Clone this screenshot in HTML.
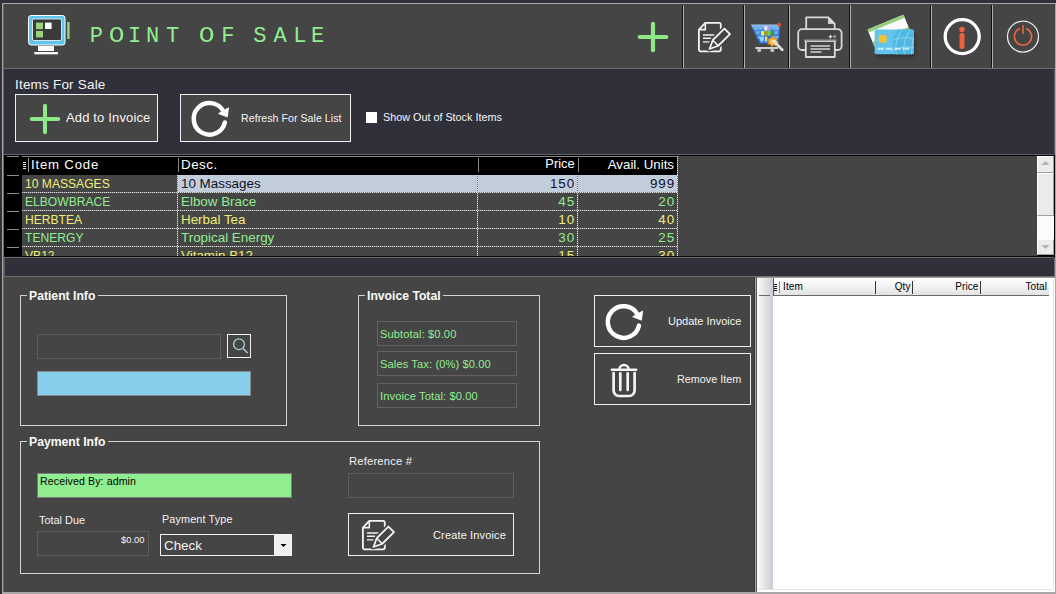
<!DOCTYPE html><html><head><meta charset="utf-8"><style>html,body{margin:0;padding:0;width:1056px;height:594px;overflow:hidden;background:#30303a;position:relative}</style></head><body>
<div style="position:absolute;left:4px;top:4px;width:1051px;height:64px;background:#454545"></div>
<div style="position:absolute;left:2px;top:3px;width:1054px;height:1px;background:#a8a8a8"></div>
<div style="position:absolute;left:2px;top:3px;width:1px;height:591px;background:#a4a4a4"></div>
<div style="position:absolute;left:3px;top:4px;width:1px;height:590px;background:#686868"></div>
<div style="position:absolute;left:1055px;top:3px;width:1px;height:591px;background:#a8a8a8"></div>
<div style="position:absolute;left:4px;top:68px;width:1051px;height:1px;background:#6c6c6c"></div>
<div style="position:absolute;left:1054px;top:69px;width:1px;height:85px;background:#5c5c5c"></div>
<div style="position:absolute;left:682px;top:5px;width:1px;height:63px;background:#111"></div>
<div style="position:absolute;left:683px;top:5px;width:1px;height:63px;background:#b0b0b0"></div>
<div style="position:absolute;left:743px;top:5px;width:1px;height:63px;background:#111"></div>
<div style="position:absolute;left:744px;top:5px;width:1px;height:63px;background:#b0b0b0"></div>
<div style="position:absolute;left:788px;top:5px;width:1px;height:63px;background:#111"></div>
<div style="position:absolute;left:789px;top:5px;width:1px;height:63px;background:#b0b0b0"></div>
<div style="position:absolute;left:849px;top:5px;width:1px;height:63px;background:#111"></div>
<div style="position:absolute;left:850px;top:5px;width:1px;height:63px;background:#b0b0b0"></div>
<div style="position:absolute;left:930px;top:5px;width:1px;height:63px;background:#111"></div>
<div style="position:absolute;left:931px;top:5px;width:1px;height:63px;background:#b0b0b0"></div>
<div style="position:absolute;left:991px;top:5px;width:1px;height:63px;background:#111"></div>
<div style="position:absolute;left:992px;top:5px;width:1px;height:63px;background:#b0b0b0"></div>
<svg style="position:absolute;left:0;top:0" width="100" height="68" viewBox="0 0 100 68">
<rect x="28.5" y="15.5" width="36.5" height="29.5" rx="2.5" fill="#5ec6ec" stroke="#fff" stroke-width="1"/>
<rect x="32.5" y="19" width="29" height="21.5" rx="1.5" fill="#3a3a3a" stroke="#fff" stroke-width="0.8"/>
<rect x="36" y="22.6" width="7" height="6.6" fill="#9bd27c"/>
<rect x="36" y="31" width="7" height="6.4" fill="#9bd27c"/>
<rect x="45" y="22.6" width="6.6" height="6.4" fill="#fff"/>
<rect x="67.2" y="22" width="2.4" height="17" fill="#9bd27c"/>
<rect x="38" y="46" width="16" height="5" fill="#fafafa"/>
<rect x="34.3" y="52" width="23.6" height="2.3" fill="#fafafa"/>
</svg>
<div style="position:absolute;left:89.8px;top:26px;font-family:'Liberation Mono',sans-serif;font-size:22px;line-height:1;font-weight:400;color:#90ee90;white-space:pre;letter-spacing:0px;">P</div>
<div style="position:absolute;left:109.5px;top:26px;font-family:'Liberation Mono',sans-serif;font-size:22px;line-height:1;font-weight:400;color:#90ee90;white-space:pre;letter-spacing:0px;transform:scaleX(1.2);">O</div>
<div style="position:absolute;left:128.0px;top:26px;font-family:'Liberation Mono',sans-serif;font-size:22px;line-height:1;font-weight:400;color:#90ee90;white-space:pre;letter-spacing:0px;">I</div>
<div style="position:absolute;left:145.9px;top:26px;font-family:'Liberation Mono',sans-serif;font-size:22px;line-height:1;font-weight:400;color:#90ee90;white-space:pre;letter-spacing:0px;">N</div>
<div style="position:absolute;left:166.0px;top:26px;font-family:'Liberation Mono',sans-serif;font-size:22px;line-height:1;font-weight:400;color:#90ee90;white-space:pre;letter-spacing:0px;">T</div>
<div style="position:absolute;left:199.9px;top:26px;font-family:'Liberation Mono',sans-serif;font-size:22px;line-height:1;font-weight:400;color:#90ee90;white-space:pre;letter-spacing:0px;transform:scaleX(1.2);">O</div>
<div style="position:absolute;left:221.2px;top:26px;font-family:'Liberation Mono',sans-serif;font-size:22px;line-height:1;font-weight:400;color:#90ee90;white-space:pre;letter-spacing:0px;">F</div>
<div style="position:absolute;left:253.2px;top:26px;font-family:'Liberation Mono',sans-serif;font-size:22px;line-height:1;font-weight:400;color:#90ee90;white-space:pre;letter-spacing:0px;">S</div>
<div style="position:absolute;left:273.5px;top:26px;font-family:'Liberation Mono',sans-serif;font-size:22px;line-height:1;font-weight:400;color:#90ee90;white-space:pre;letter-spacing:0px;">A</div>
<div style="position:absolute;left:293.2px;top:26px;font-family:'Liberation Mono',sans-serif;font-size:22px;line-height:1;font-weight:400;color:#90ee90;white-space:pre;letter-spacing:0px;">L</div>
<div style="position:absolute;left:311.1px;top:26px;font-family:'Liberation Mono',sans-serif;font-size:22px;line-height:1;font-weight:400;color:#90ee90;white-space:pre;letter-spacing:0px;">E</div>
<svg style="position:absolute;left:0;top:0;overflow:visible" width="1" height="1"><path d="M639.75 37H666.25M653 23.75V50.25" stroke="#8ee88a" stroke-width="4.2" stroke-linecap="round" fill="none"/></svg>
<svg style="position:absolute;left:698px;top:21.6px;overflow:visible" width="34" height="32" viewBox="0 0 34 32"><path d="M0.9 7.6L7.3 0.9H21a1.8 1.8 0 0 1 1.8 1.8V27.6a1.8 1.8 0 0 1 -1.8 1.8H2.7a1.8 1.8 0 0 1 -1.8 -1.8Z" fill="none" stroke="#f4f4f4" stroke-width="1.8" stroke-linejoin="round"/><path d="M7.3 0.9V7.6H0.9" fill="none" stroke="#f4f4f4" stroke-width="1.6"/><path d="M5 13H16.5M5 16.3H13M5 19.9H11.8" stroke="#f4f4f4" stroke-width="1.4"/><path d="M11.50 27.00L20.27 23.75L31.94 12.08L26.42 6.56L14.75 18.23Z" fill="#454545" stroke="#454545" stroke-width="5" stroke-linejoin="round"/><path d="M11.50 27.00L20.27 23.75L31.94 12.08L26.42 6.56L14.75 18.23Z" fill="#454545" stroke="#f4f4f4" stroke-width="1.8" stroke-linejoin="round"/><path d="M20.27 23.75L14.75 18.23" stroke="#f4f4f4" stroke-width="1.6"/></svg>
<svg style="position:absolute;left:745px;top:15px" width="45" height="45" viewBox="745 15 45 45">
<defs><linearGradient id="cg" x1="0" y1="0" x2="0" y2="1"><stop offset="0" stop-color="#9cc4f4"/><stop offset="0.25" stop-color="#4f8ee6"/><stop offset="1" stop-color="#2456cc"/></linearGradient>
<radialGradient id="sg"><stop offset="0" stop-color="#fce070"/><stop offset="0.6" stop-color="#f6a424"/><stop offset="1" stop-color="#e0601a"/></radialGradient></defs>
<path d="M750.9 24.6H779.6L778.9 43.8H759.4Z" fill="url(#cg)"/>
<g fill="#6fc0f2" opacity="0.9">
<rect x="754.5" y="27" width="3.2" height="2.6"/><rect x="758.8" y="27" width="3.2" height="2.6"/><rect x="772.5" y="27" width="3.2" height="2.6"/><rect x="776" y="27" width="2.6" height="2.6"/>
<rect x="756.2" y="31.2" width="3.2" height="2.8"/><rect x="774.5" y="31.2" width="3.2" height="2.8"/>
<rect x="757.8" y="35.8" width="2.6" height="3"/><rect x="772.5" y="35.8" width="3.2" height="3"/><rect x="776" y="35.8" width="2.5" height="3"/>
<rect x="760.2" y="40" width="3" height="2.5"/><rect x="764.5" y="40" width="3" height="2.5"/>
</g>
<rect x="764.3" y="26.3" width="3.2" height="4.2" fill="#ecebfa"/><rect x="767.5" y="26.3" width="3.2" height="4.2" fill="#a9a4d8"/>
<rect x="761" y="31.1" width="3.2" height="4.5" fill="#f0ec5a"/><rect x="764.2" y="31.1" width="3" height="4.5" fill="#9aa030"/>
<rect x="767.5" y="31.1" width="3.2" height="4.5" fill="#78d050"/><rect x="770.7" y="31.1" width="3" height="4.5" fill="#3c9a30"/>
<rect x="759.8" y="36.6" width="4.2" height="4.1" fill="#8fd4f6"/><rect x="765" y="36.6" width="2.2" height="4.1" fill="#f0ec5a"/>
<circle cx="779.2" cy="24.7" r="1.9" fill="#e84a30"/>
<path d="M773 35.6L774.4 38.6L777.8 37.4L776.6 40.6L779.4 42.5L776.2 43.5L776.6 46.8L773.5 45.2L771.2 47.6L770.4 44.4L767 44.6L768.8 41.8L766.4 39.4L769.8 38.4Z" fill="url(#sg)"/>
<path d="M773.8 41.2L782.3 49.8" stroke="#f0f0f0" stroke-width="2.6" stroke-linecap="round"/>
<path d="M775 42.4L782 49.4" stroke="#8a8a8a" stroke-width="0.9" stroke-dasharray="1 1.2"/>
<path d="M755.4 48H778" stroke="#d0d0d0" stroke-width="2"/>
<circle cx="759.2" cy="50.2" r="1.9" fill="#c4c4c4"/><circle cx="772.3" cy="50.2" r="1.9" fill="#c4c4c4"/>
</svg>
<svg style="position:absolute;left:790px;top:10px" width="60" height="55" viewBox="790 10 60 55">
<g fill="none" stroke="#dadada" stroke-width="1.8" stroke-linejoin="round">
<path d="M806.2 29.4V17.4H828.4L834.6 23.6V29.4"/>
<path d="M805 50H802a3.8 3.8 0 0 1 -3.8 -3.8V33a3.8 3.8 0 0 1 3.8 -3.8H837.8a3.8 3.8 0 0 1 3.8 3.8V46.2a3.8 3.8 0 0 1 -3.8 3.8H835"/>
<rect x="805.8" y="41.2" width="29" height="15.8"/>
</g>
<path d="M828.4 17.4V23.6H834.6Z" fill="#dadada" stroke="#dadada" stroke-width="0.8"/>
<path d="M804 40.3H836.5" stroke="#9a9a9a" stroke-width="1.8"/>
<path d="M810.5 45.9H830M810.5 48.9H830M810.5 51.9H821.5" stroke="#d4d4d4" stroke-width="1.5"/>
<path d="M828.7 36.6H832.3M830.5 34.8V38.4" stroke="#e0e0e0" stroke-width="1.1"/><path d="M833 36.6H836.4M834.7 34.9V38.3" stroke="#a8a8a8" stroke-width="1"/>
</svg>
<svg style="position:absolute;left:851px;top:5px" width="79" height="62" viewBox="851 5 79 62">
<defs><filter id="sh" x="-20%" y="-20%" width="140%" height="160%"><feGaussianBlur stdDeviation="1.6"/></filter>
<clipPath id="fc"><rect x="874.6" y="29.6" width="39.4" height="24.6" rx="2"/></clipPath></defs>
<rect x="876" y="33" width="39.4" height="24.6" rx="2" fill="#202020" opacity="0.55" filter="url(#sh)"/>
<g transform="translate(867.4 29.6) rotate(-22.5)">
<rect x="0" y="0" width="39" height="19" rx="1.5" fill="#fbfbfb"/>
<rect x="0" y="0" width="39" height="3.2" fill="#94d07a"/>
<rect x="0" y="13.4" width="39" height="5.6" fill="#94d07a"/>
</g>
<rect x="874.6" y="29.6" width="39.4" height="24.6" rx="2" fill="#63c5ec"/>
<g clip-path="url(#fc)">
<circle cx="918" cy="44" r="25" fill="#4eb8e4"/>
<g stroke="#92d8f2" stroke-width="0.9" fill="none">
<path d="M897 56C894 46 897 36 903 28"/><path d="M905 56C902 46 905 36 912 28"/>
<path d="M891 51C899 47 908 46 916 48"/><path d="M894 40C901 37 908 37 916 39"/>
<path d="M912 56C911 47 913 38 916 32"/>
</g></g>
<rect x="878.7" y="35" width="7.9" height="7.7" rx="1.6" fill="#f2c232"/>
<path d="M877.5 48.8H884M886 48.8H892.5M894.5 48.8H901M903 48.8H909.5" stroke="#f4fbff" stroke-width="2" stroke-dasharray="1.1 0.5"/>
</svg>
<svg style="position:absolute;left:931px;top:5px" width="60" height="63" viewBox="931 5 60 63">
<circle cx="962.2" cy="36.6" r="17" fill="none" stroke="#fff" stroke-width="3.3"/>
<circle cx="962" cy="29.4" r="2.7" fill="#ea6240"/>
<path d="M962 35.3V46.5" stroke="#ea6240" stroke-width="5" stroke-linecap="round"/>
</svg>
<svg style="position:absolute;left:993px;top:5px" width="61" height="63" viewBox="993 5 61 63">
<circle cx="1023" cy="36.6" r="15.5" fill="none" stroke="#e8e8e8" stroke-width="1.3"/>
<path d="M1019.8 28.5A8.6 8.6 0 1 0 1026.2 28.5" fill="none" stroke="#ee6a40" stroke-width="1.5"/>
<path d="M1023 25.3V34" stroke="#c8623e" stroke-width="2"/>
</svg>
<div style="position:absolute;left:15px;top:78px;font-family:'Liberation Sans',sans-serif;font-size:13.5px;line-height:1;font-weight:400;color:#f4f4f4;white-space:pre;letter-spacing:0.2px;">Items For Sale</div>
<div style="position:absolute;left:15px;top:94px;width:143px;height:48px;box-sizing:border-box;border:1px solid #f0f0f0;background:#454545;"></div>
<svg style="position:absolute;left:0;top:0;overflow:visible" width="1" height="1"><path d="M31.75 119H58.25M45 105.75V132.25" stroke="#8ee88a" stroke-width="4" stroke-linecap="round" fill="none"/></svg>
<div style="position:absolute;left:66px;top:111px;font-family:'Liberation Sans',sans-serif;font-size:13px;line-height:1;font-weight:400;color:#f4f4f4;white-space:pre;letter-spacing:0.15px;">Add to Invoice</div>
<div style="position:absolute;left:180px;top:94px;width:171px;height:48px;box-sizing:border-box;border:1px solid #f0f0f0;background:#454545;"></div>
<svg style="position:absolute;left:0;top:0;overflow:visible" width="1" height="1"><path d="M224.87 122.46A15.8 15.8 0 1 1 223.18 110.90" stroke="#fff" stroke-width="4.5" stroke-linecap="round" fill="none"/><path d="M228.55 107.80L218.51 113.60L227.40 117.01Z" fill="#fff" stroke="#fff" stroke-width="0.8" stroke-linejoin="round"/></svg>
<div style="position:absolute;left:241px;top:113px;font-family:'Liberation Sans',sans-serif;font-size:10.6px;line-height:1;font-weight:400;color:#f4f4f4;white-space:pre;letter-spacing:0.05px;">Refresh For Sale List</div>
<div style="position:absolute;left:366px;top:112px;width:11px;height:11px;background:#fff"></div>
<div style="position:absolute;left:383px;top:112px;font-family:'Liberation Sans',sans-serif;font-size:10.8px;line-height:1;font-weight:400;color:#f4f4f4;white-space:pre;letter-spacing:0px;">Show Out of Stock Items</div>
<div style="position:absolute;left:4px;top:154px;width:1050px;height:1px;background:#626262"></div>
<div style="position:absolute;left:4px;top:155px;width:1051px;height:101px;background:#000"></div>
<div style="position:absolute;left:4px;top:256px;width:1050px;height:1px;background:#0a0a0a"></div>
<div style="position:absolute;left:4px;top:257px;width:1050px;height:1px;background:#6a6a6a"></div>
<div style="position:absolute;left:4px;top:258px;width:1px;height:18px;background:#5a5a5a"></div>
<div style="position:absolute;left:1054px;top:258px;width:1px;height:18px;background:#6a6a6a"></div>
<div style="position:absolute;left:4px;top:276px;width:1051px;height:1px;background:#6e6e6e"></div>
<div style="position:absolute;left:4px;top:277px;width:1051px;height:315px;background:#454545"></div>
<div style="position:absolute;left:678px;top:156px;width:359px;height:100px;background:#454545"></div>
<div style="position:absolute;left:22px;top:156px;width:656px;height:1px;background:#888888"></div>
<div style="position:absolute;left:7px;top:156px;width:12px;height:1px;background:#8c8c8c"></div>
<div style="position:absolute;left:7px;top:175px;width:12px;height:1px;background:#8c8c8c"></div>
<div style="position:absolute;left:7px;top:193px;width:12px;height:1px;background:#8c8c8c"></div>
<div style="position:absolute;left:7px;top:211px;width:12px;height:1px;background:#8c8c8c"></div>
<div style="position:absolute;left:7px;top:229px;width:12px;height:1px;background:#8c8c8c"></div>
<div style="position:absolute;left:7px;top:247px;width:12px;height:1px;background:#8c8c8c"></div>
<div style="position:absolute;left:23px;top:162px;width:3px;height:1px;background:#e8e8e8"></div>
<div style="position:absolute;left:23px;top:164px;width:3px;height:1px;background:#e8e8e8"></div>
<div style="position:absolute;left:23px;top:166px;width:3px;height:1px;background:#e8e8e8"></div>
<div style="position:absolute;left:23px;top:168px;width:3px;height:1px;background:#e8e8e8"></div>
<div style="position:absolute;left:28px;top:158px;width:1px;height:14px;background:#9a9a9a"></div>
<div style="position:absolute;left:178px;top:158px;width:1px;height:14px;background:#8a8a8a"></div>
<div style="position:absolute;left:478px;top:158px;width:1px;height:14px;background:#8a8a8a"></div>
<div style="position:absolute;left:578px;top:158px;width:1px;height:14px;background:#8a8a8a"></div>
<div style="position:absolute;left:31px;top:158px;font-family:'Liberation Sans',sans-serif;font-size:13.2px;line-height:1;font-weight:400;color:#fff;white-space:pre;letter-spacing:0.8px;">Item Code</div>
<div style="position:absolute;left:181px;top:158px;font-family:'Liberation Sans',sans-serif;font-size:13.4px;line-height:1;font-weight:400;color:#fff;white-space:pre;letter-spacing:0.5px;">Desc.</div>
<div style="position:absolute;left:-25.5px;width:600px;text-align:right;top:158px;font-family:'Liberation Sans',sans-serif;font-size:12.8px;line-height:1;font-weight:400;color:#fff;white-space:pre;letter-spacing:0px;">Price</div>
<div style="position:absolute;left:74px;width:600px;text-align:right;top:158px;font-family:'Liberation Sans',sans-serif;font-size:13.3px;line-height:1;font-weight:400;color:#fff;white-space:pre;letter-spacing:0px;">Avail. Units</div>
<div style="position:absolute;left:22px;top:175px;width:155px;height:17px;background:#454545"></div>
<div style="position:absolute;left:178px;top:175px;width:299px;height:17px;background:#c1cddb"></div>
<div style="position:absolute;left:478px;top:175px;width:99px;height:17px;background:#c1cddb"></div>
<div style="position:absolute;left:578px;top:175px;width:99px;height:17px;background:#c1cddb"></div>
<div style="position:absolute;left:22px;top:192px;width:656px;height:1px;background-image:linear-gradient(90deg,#dadada 50%,#7a7a7a 50%);background-size:2px 1px"></div>
<div style="position:absolute;left:25px;top:178px;font-family:'Liberation Sans',sans-serif;font-size:12.1px;line-height:1;font-weight:400;color:#f0ee78;white-space:pre;letter-spacing:0px;">10 MASSAGES</div>
<div style="position:absolute;left:181px;top:177px;font-family:'Liberation Sans',sans-serif;font-size:13.4px;line-height:1;font-weight:400;color:#10102a;white-space:pre;letter-spacing:0px;">10 Massages</div>
<div style="position:absolute;left:-25px;width:600px;text-align:right;top:177px;font-family:'Liberation Sans',sans-serif;font-size:13.4px;line-height:1;font-weight:400;color:#10102a;white-space:pre;letter-spacing:0.9px;">150</div>
<div style="position:absolute;left:75px;width:600px;text-align:right;top:177px;font-family:'Liberation Sans',sans-serif;font-size:13.4px;line-height:1;font-weight:400;color:#10102a;white-space:pre;letter-spacing:0.9px;">999</div>
<div style="position:absolute;left:22px;top:193px;width:155px;height:17px;background:#454545"></div>
<div style="position:absolute;left:178px;top:193px;width:299px;height:17px;background:#454545"></div>
<div style="position:absolute;left:478px;top:193px;width:99px;height:17px;background:#454545"></div>
<div style="position:absolute;left:578px;top:193px;width:99px;height:17px;background:#454545"></div>
<div style="position:absolute;left:22px;top:210px;width:656px;height:1px;background-image:linear-gradient(90deg,#dadada 50%,#7a7a7a 50%);background-size:2px 1px"></div>
<div style="position:absolute;left:25px;top:196px;font-family:'Liberation Sans',sans-serif;font-size:12.1px;line-height:1;font-weight:400;color:#90ee90;white-space:pre;letter-spacing:0px;">ELBOWBRACE</div>
<div style="position:absolute;left:181px;top:195px;font-family:'Liberation Sans',sans-serif;font-size:13.4px;line-height:1;font-weight:400;color:#90ee90;white-space:pre;letter-spacing:0px;">Elbow Brace</div>
<div style="position:absolute;left:-25px;width:600px;text-align:right;top:195px;font-family:'Liberation Sans',sans-serif;font-size:13.4px;line-height:1;font-weight:400;color:#90ee90;white-space:pre;letter-spacing:0.9px;">45</div>
<div style="position:absolute;left:75px;width:600px;text-align:right;top:195px;font-family:'Liberation Sans',sans-serif;font-size:13.4px;line-height:1;font-weight:400;color:#90ee90;white-space:pre;letter-spacing:0.9px;">20</div>
<div style="position:absolute;left:22px;top:211px;width:155px;height:17px;background:#454545"></div>
<div style="position:absolute;left:178px;top:211px;width:299px;height:17px;background:#454545"></div>
<div style="position:absolute;left:478px;top:211px;width:99px;height:17px;background:#454545"></div>
<div style="position:absolute;left:578px;top:211px;width:99px;height:17px;background:#454545"></div>
<div style="position:absolute;left:22px;top:228px;width:656px;height:1px;background-image:linear-gradient(90deg,#dadada 50%,#7a7a7a 50%);background-size:2px 1px"></div>
<div style="position:absolute;left:25px;top:214px;font-family:'Liberation Sans',sans-serif;font-size:12.1px;line-height:1;font-weight:400;color:#f0ee78;white-space:pre;letter-spacing:0px;">HERBTEA</div>
<div style="position:absolute;left:181px;top:213px;font-family:'Liberation Sans',sans-serif;font-size:13.4px;line-height:1;font-weight:400;color:#f0ee78;white-space:pre;letter-spacing:0px;">Herbal Tea</div>
<div style="position:absolute;left:-25px;width:600px;text-align:right;top:213px;font-family:'Liberation Sans',sans-serif;font-size:13.4px;line-height:1;font-weight:400;color:#f0ee78;white-space:pre;letter-spacing:0.9px;">10</div>
<div style="position:absolute;left:75px;width:600px;text-align:right;top:213px;font-family:'Liberation Sans',sans-serif;font-size:13.4px;line-height:1;font-weight:400;color:#f0ee78;white-space:pre;letter-spacing:0.9px;">40</div>
<div style="position:absolute;left:22px;top:229px;width:155px;height:17px;background:#454545"></div>
<div style="position:absolute;left:178px;top:229px;width:299px;height:17px;background:#454545"></div>
<div style="position:absolute;left:478px;top:229px;width:99px;height:17px;background:#454545"></div>
<div style="position:absolute;left:578px;top:229px;width:99px;height:17px;background:#454545"></div>
<div style="position:absolute;left:22px;top:246px;width:656px;height:1px;background-image:linear-gradient(90deg,#dadada 50%,#7a7a7a 50%);background-size:2px 1px"></div>
<div style="position:absolute;left:25px;top:232px;font-family:'Liberation Sans',sans-serif;font-size:12.1px;line-height:1;font-weight:400;color:#90ee90;white-space:pre;letter-spacing:0px;">TENERGY</div>
<div style="position:absolute;left:181px;top:231px;font-family:'Liberation Sans',sans-serif;font-size:13.4px;line-height:1;font-weight:400;color:#90ee90;white-space:pre;letter-spacing:0px;">Tropical Energy</div>
<div style="position:absolute;left:-25px;width:600px;text-align:right;top:231px;font-family:'Liberation Sans',sans-serif;font-size:13.4px;line-height:1;font-weight:400;color:#90ee90;white-space:pre;letter-spacing:0.9px;">30</div>
<div style="position:absolute;left:75px;width:600px;text-align:right;top:231px;font-family:'Liberation Sans',sans-serif;font-size:13.4px;line-height:1;font-weight:400;color:#90ee90;white-space:pre;letter-spacing:0.9px;">25</div>
<div style="position:absolute;left:22px;top:247px;width:155px;height:9px;background:#454545"></div>
<div style="position:absolute;left:178px;top:247px;width:299px;height:9px;background:#454545"></div>
<div style="position:absolute;left:478px;top:247px;width:99px;height:9px;background:#454545"></div>
<div style="position:absolute;left:578px;top:247px;width:99px;height:9px;background:#454545"></div>
<div style="position:absolute;left:25px;top:250px;font-family:'Liberation Sans',sans-serif;font-size:12.1px;line-height:1;font-weight:400;color:#f0ee78;white-space:pre;letter-spacing:0px;">VB12</div>
<div style="position:absolute;left:181px;top:249px;font-family:'Liberation Sans',sans-serif;font-size:13.4px;line-height:1;font-weight:400;color:#f0ee78;white-space:pre;letter-spacing:0px;">Vitamin B12</div>
<div style="position:absolute;left:-25px;width:600px;text-align:right;top:249px;font-family:'Liberation Sans',sans-serif;font-size:13.4px;line-height:1;font-weight:400;color:#f0ee78;white-space:pre;letter-spacing:0.9px;">15</div>
<div style="position:absolute;left:75px;width:600px;text-align:right;top:249px;font-family:'Liberation Sans',sans-serif;font-size:13.4px;line-height:1;font-weight:400;color:#f0ee78;white-space:pre;letter-spacing:0.9px;">30</div>
<div style="position:absolute;left:677px;top:156px;width:1px;height:19px;background-image:linear-gradient(180deg,#dadada 50%,#7a7a7a 50%);background-size:1px 2px"></div>
<div style="position:absolute;left:177px;top:175px;width:1px;height:81px;background-image:linear-gradient(180deg,#dadada 50%,#7a7a7a 50%);background-size:1px 2px"></div>
<div style="position:absolute;left:477px;top:175px;width:1px;height:81px;background-image:linear-gradient(180deg,#dadada 50%,#7a7a7a 50%);background-size:1px 2px"></div>
<div style="position:absolute;left:577px;top:175px;width:1px;height:81px;background-image:linear-gradient(180deg,#dadada 50%,#7a7a7a 50%);background-size:1px 2px"></div>
<div style="position:absolute;left:677px;top:175px;width:1px;height:81px;background-image:linear-gradient(180deg,#dadada 50%,#7a7a7a 50%);background-size:1px 2px"></div>
<div style="position:absolute;left:4px;top:256px;width:1050px;height:1px;background:#0a0a0a"></div>
<div style="position:absolute;left:4px;top:257px;width:1050px;height:1px;background:#6a6a6a"></div>
<div style="position:absolute;left:5px;top:258px;width:1049px;height:18px;background:#30303a"></div>
<div style="position:absolute;left:4px;top:258px;width:1px;height:18px;background:#5a5a5a"></div>
<div style="position:absolute;left:1037px;top:156px;width:17px;height:99px;background:#f4f4f4"></div>
<div style="position:absolute;left:1037px;top:156px;width:17px;height:17px;box-sizing:border-box;background:#ececec;border-top:1px solid #fff;border-left:1px solid #fff;border-bottom:1px solid #a0a0a0;border-right:1px solid #a0a0a0"></div>
<svg style="position:absolute;left:1037px;top:156px" width="17" height="17"><path d="M4.5 9H12.5L8.5 5Z" fill="#b4b4b4"/></svg>
<div style="position:absolute;left:1037px;top:173px;width:17px;height:43px;box-sizing:border-box;background:#ececec;border-top:1px solid #fff;border-left:1px solid #fff;border-bottom:1px solid #a0a0a0;border-right:1px solid #a0a0a0"></div>
<div style="position:absolute;left:1037px;top:216px;width:17px;height:23px;background:#fbfbfb"></div>
<div style="position:absolute;left:1037px;top:239px;width:17px;height:16px;box-sizing:border-box;background:#ececec;border-top:1px solid #fff;border-left:1px solid #fff;border-bottom:1px solid #a0a0a0;border-right:1px solid #a0a0a0"></div>
<svg style="position:absolute;left:1037px;top:239px" width="17" height="16"><path d="M4.5 6H12.5L8.5 10Z" fill="#b4b4b4"/></svg>
<div style="position:absolute;left:1054px;top:155px;width:1px;height:102px;background:#000"></div>
<div style="position:absolute;left:20px;top:295px;width:267px;height:131px;box-sizing:border-box;border:1px solid #d4d4d4;background:transparent;"></div>
<div style="position:absolute;left:27px;top:294px;width:71px;height:3px;background:#454545"></div>
<div style="position:absolute;left:29px;top:290px;font-family:'Liberation Sans',sans-serif;font-size:12.2px;line-height:1;font-weight:700;color:#fafafa;white-space:pre;letter-spacing:0px;">Patient Info</div>
<div style="position:absolute;left:37px;top:334px;width:184px;height:25px;box-sizing:border-box;border:1px solid #5e5e5e;background:transparent;"></div>
<div style="position:absolute;left:227px;top:334px;width:24px;height:24px;box-sizing:border-box;border:1px solid #f4f4f4;background:transparent;"></div>
<svg style="position:absolute;left:0;top:0;overflow:visible" width="1" height="1"><circle cx="239" cy="344.3" r="5.4" fill="none" stroke="#aad2dc" stroke-width="1.3"/><path d="M242.9 348.2L247.6 352.9" stroke="#aad2dc" stroke-width="1.4"/></svg>
<div style="position:absolute;left:37px;top:371px;width:214px;height:25px;box-sizing:border-box;border:1px solid #8a8a8a;background:#87ceeb;"></div>
<div style="position:absolute;left:358px;top:295px;width:182px;height:131px;box-sizing:border-box;border:1px solid #d4d4d4;background:transparent;"></div>
<div style="position:absolute;left:365px;top:294px;width:78px;height:3px;background:#454545"></div>
<div style="position:absolute;left:367px;top:290px;font-family:'Liberation Sans',sans-serif;font-size:12.2px;line-height:1;font-weight:700;color:#fafafa;white-space:pre;letter-spacing:0px;">Invoice Total</div>
<div style="position:absolute;left:377px;top:321px;width:140px;height:25px;box-sizing:border-box;border:1px solid #626262;background:transparent;"></div>
<div style="position:absolute;left:380px;top:329px;font-family:'Liberation Sans',sans-serif;font-size:11.1px;line-height:1;font-weight:400;color:#90ee90;white-space:pre;letter-spacing:0.12px;">Subtotal: $0.00</div>
<div style="position:absolute;left:377px;top:351px;width:140px;height:25px;box-sizing:border-box;border:1px solid #626262;background:transparent;"></div>
<div style="position:absolute;left:380px;top:359px;font-family:'Liberation Sans',sans-serif;font-size:11.1px;line-height:1;font-weight:400;color:#90ee90;white-space:pre;letter-spacing:0.12px;">Sales Tax: (0%) $0.00</div>
<div style="position:absolute;left:377px;top:383px;width:140px;height:25px;box-sizing:border-box;border:1px solid #626262;background:transparent;"></div>
<div style="position:absolute;left:380px;top:391px;font-family:'Liberation Sans',sans-serif;font-size:11.1px;line-height:1;font-weight:400;color:#90ee90;white-space:pre;letter-spacing:0.12px;">Invoice Total: $0.00</div>
<div style="position:absolute;left:594px;top:295px;width:157px;height:52px;box-sizing:border-box;border:1px solid #f0f0f0;background:transparent;"></div>
<svg style="position:absolute;left:0;top:0;overflow:visible" width="1" height="1"><path d="M638.97 325.66A15.8 15.8 0 1 1 637.28 314.10" stroke="#fff" stroke-width="4.5" stroke-linecap="round" fill="none"/><path d="M642.65 311.00L632.61 316.80L641.50 320.21Z" fill="#fff" stroke="#fff" stroke-width="0.8" stroke-linejoin="round"/></svg>
<div style="position:absolute;left:668px;top:316px;font-family:'Liberation Sans',sans-serif;font-size:11px;line-height:1;font-weight:400;color:#f4f4f4;white-space:pre;letter-spacing:0px;">Update Invoice</div>
<div style="position:absolute;left:594px;top:353px;width:157px;height:52px;box-sizing:border-box;border:1px solid #f0f0f0;background:transparent;"></div>
<svg style="position:absolute;left:0;top:0;overflow:visible" width="1" height="1"><path d="M619.3 369.7A4.7 4.7 0 0 1 628.7 369.7" fill="none" stroke="#f4f4f4" stroke-width="2.6"/><path d="M611.9 369.7H636.1" stroke="#f4f4f4" stroke-width="2.6" stroke-linecap="round"/><path d="M613.6 373V390.5a5.5 5.5 0 0 0 5.5 5.5H629.1a5.5 5.5 0 0 0 5.5 -5.5V373" fill="none" stroke="#f4f4f4" stroke-width="2.7" stroke-linecap="round"/><path d="M620.3 373.3V390M627.7 373.3V390" stroke="#f4f4f4" stroke-width="2.7" stroke-linecap="round"/></svg>
<div style="position:absolute;left:677px;top:374px;font-family:'Liberation Sans',sans-serif;font-size:10.8px;line-height:1;font-weight:400;color:#f4f4f4;white-space:pre;letter-spacing:0px;">Remove Item</div>
<div style="position:absolute;left:754px;top:277px;width:1px;height:315px;background:#343434"></div>
<div style="position:absolute;left:755px;top:277px;width:1px;height:315px;background:#a8a8a8"></div>
<div style="position:absolute;left:756px;top:277px;width:1px;height:315px;background:#5a5a5a"></div>
<div style="position:absolute;left:757px;top:277px;width:298px;height:315px;background:#fff"></div>
<div style="position:absolute;left:757px;top:277px;width:298px;height:1px;background:#9a9a9a"></div>
<div style="position:absolute;left:757px;top:278px;width:16px;height:312px;background:linear-gradient(90deg,#fbfbfc,#c9cdd3)"></div>
<div style="position:absolute;left:773px;top:278px;width:276px;height:17px;background:linear-gradient(180deg,#ffffff,#f2f2f2 50%,#e2e2e2)"></div>
<div style="position:absolute;left:773px;top:295px;width:276px;height:1px;background:#6a6a6a"></div>
<div style="position:absolute;left:773px;top:278px;width:1px;height:18px;background:#5a5a5a"></div>
<div style="position:absolute;left:759px;top:295px;width:11px;height:1px;background:#6a6a6a"></div>
<div style="position:absolute;left:774px;top:284px;width:3px;height:1px;background:#111"></div>
<div style="position:absolute;left:774px;top:286px;width:3px;height:1px;background:#111"></div>
<div style="position:absolute;left:774px;top:288px;width:3px;height:1px;background:#111"></div>
<div style="position:absolute;left:774px;top:290px;width:3px;height:1px;background:#111"></div>
<div style="position:absolute;left:779px;top:281px;width:1px;height:12px;background:#888"></div>
<div style="position:absolute;left:875px;top:281px;width:1px;height:13px;background:#333"></div>
<div style="position:absolute;left:912px;top:281px;width:1px;height:13px;background:#333"></div>
<div style="position:absolute;left:980px;top:281px;width:1px;height:13px;background:#333"></div>
<div style="position:absolute;left:783px;top:281.5px;font-family:'Liberation Sans',sans-serif;font-size:10px;line-height:1;font-weight:400;color:#000;white-space:pre;letter-spacing:0.1px;">Item</div>
<div style="position:absolute;left:310.5px;width:600px;text-align:right;top:281.5px;font-family:'Liberation Sans',sans-serif;font-size:10px;line-height:1;font-weight:400;color:#000;white-space:pre;letter-spacing:0.1px;">Qty</div>
<div style="position:absolute;left:378.5px;width:600px;text-align:right;top:281.5px;font-family:'Liberation Sans',sans-serif;font-size:10px;line-height:1;font-weight:400;color:#000;white-space:pre;letter-spacing:0.1px;">Price</div>
<div style="position:absolute;left:447px;width:600px;text-align:right;top:281.5px;font-family:'Liberation Sans',sans-serif;font-size:10px;line-height:1;font-weight:400;color:#000;white-space:pre;letter-spacing:0.1px;">Total</div>
<div style="position:absolute;left:1053px;top:278px;width:1px;height:312px;background:#e4e4e4"></div>
<div style="position:absolute;left:757px;top:589px;width:297px;height:1px;background:#e4e4e4"></div>
<div style="position:absolute;left:2px;top:592px;width:1054px;height:2px;background:#a8a8a8"></div>
<div style="position:absolute;left:20px;top:441px;width:520px;height:133px;box-sizing:border-box;border:1px solid #d4d4d4;background:transparent;"></div>
<div style="position:absolute;left:27px;top:440px;width:81px;height:3px;background:#454545"></div>
<div style="position:absolute;left:29px;top:436px;font-family:'Liberation Sans',sans-serif;font-size:12.2px;line-height:1;font-weight:700;color:#fafafa;white-space:pre;letter-spacing:0px;">Payment Info</div>
<div style="position:absolute;left:37px;top:473px;width:255px;height:25px;box-sizing:border-box;border:1px solid #7c7c7c;background:#90ee90;"></div>
<div style="position:absolute;left:40px;top:476px;font-family:'Liberation Sans',sans-serif;font-size:10.6px;line-height:1;font-weight:400;color:#000;white-space:pre;letter-spacing:0.1px;">Received By: admin</div>
<div style="position:absolute;left:39px;top:515px;font-family:'Liberation Sans',sans-serif;font-size:10.9px;line-height:1;font-weight:400;color:#f4f4f4;white-space:pre;letter-spacing:0px;">Total Due</div>
<div style="position:absolute;left:37px;top:531px;width:112px;height:25px;box-sizing:border-box;border:1px solid #5e5e5e;background:transparent;"></div>
<div style="position:absolute;left:-455.5px;width:600px;text-align:right;top:535px;font-family:'Liberation Sans',sans-serif;font-size:9.4px;line-height:1;font-weight:400;color:#f4f4f4;white-space:pre;letter-spacing:0px;">$0.00</div>
<div style="position:absolute;left:162px;top:514px;font-family:'Liberation Sans',sans-serif;font-size:10.8px;line-height:1;font-weight:400;color:#f4f4f4;white-space:pre;letter-spacing:0.15px;">Payment Type</div>
<div style="position:absolute;left:160px;top:534px;width:132px;height:22px;box-sizing:border-box;border:1px solid #f4f4f4;background:transparent;"></div>
<div style="position:absolute;left:274px;top:535px;width:17px;height:20px;background:#f0f0f0"></div>
<svg style="position:absolute;left:274px;top:535px" width="17" height="20"><path d="M6.5 9H12.5L9.5 12Z" fill="#000"/></svg>
<div style="position:absolute;left:164px;top:539px;font-family:'Liberation Sans',sans-serif;font-size:13.4px;line-height:1;font-weight:400;color:#f4f4f4;white-space:pre;letter-spacing:0px;">Check</div>
<div style="position:absolute;left:349px;top:456px;font-family:'Liberation Sans',sans-serif;font-size:11.2px;line-height:1;font-weight:400;color:#f4f4f4;white-space:pre;letter-spacing:0.2px;">Reference #</div>
<div style="position:absolute;left:348px;top:473px;width:166px;height:25px;box-sizing:border-box;border:1px solid #5e5e5e;background:transparent;"></div>
<div style="position:absolute;left:348px;top:513px;width:166px;height:43px;box-sizing:border-box;border:1px solid #f0f0f0;background:transparent;"></div>
<svg style="position:absolute;left:362px;top:519.7px;overflow:visible" width="34" height="32" viewBox="0 0 34 32"><path d="M0.9 7.6L7.3 0.9H21a1.8 1.8 0 0 1 1.8 1.8V27.6a1.8 1.8 0 0 1 -1.8 1.8H2.7a1.8 1.8 0 0 1 -1.8 -1.8Z" fill="none" stroke="#f4f4f4" stroke-width="1.8" stroke-linejoin="round"/><path d="M7.3 0.9V7.6H0.9" fill="none" stroke="#f4f4f4" stroke-width="1.6"/><path d="M5 13H16.5M5 16.3H13M5 19.9H11.8" stroke="#f4f4f4" stroke-width="1.4"/><path d="M11.50 27.00L20.27 23.75L31.94 12.08L26.42 6.56L14.75 18.23Z" fill="#454545" stroke="#454545" stroke-width="5" stroke-linejoin="round"/><path d="M11.50 27.00L20.27 23.75L31.94 12.08L26.42 6.56L14.75 18.23Z" fill="#454545" stroke="#f4f4f4" stroke-width="1.8" stroke-linejoin="round"/><path d="M20.27 23.75L14.75 18.23" stroke="#f4f4f4" stroke-width="1.6"/></svg>
<div style="position:absolute;left:433px;top:530px;font-family:'Liberation Sans',sans-serif;font-size:11px;line-height:1;font-weight:400;color:#f4f4f4;white-space:pre;letter-spacing:0.15px;">Create Invoice</div>
</body></html>
